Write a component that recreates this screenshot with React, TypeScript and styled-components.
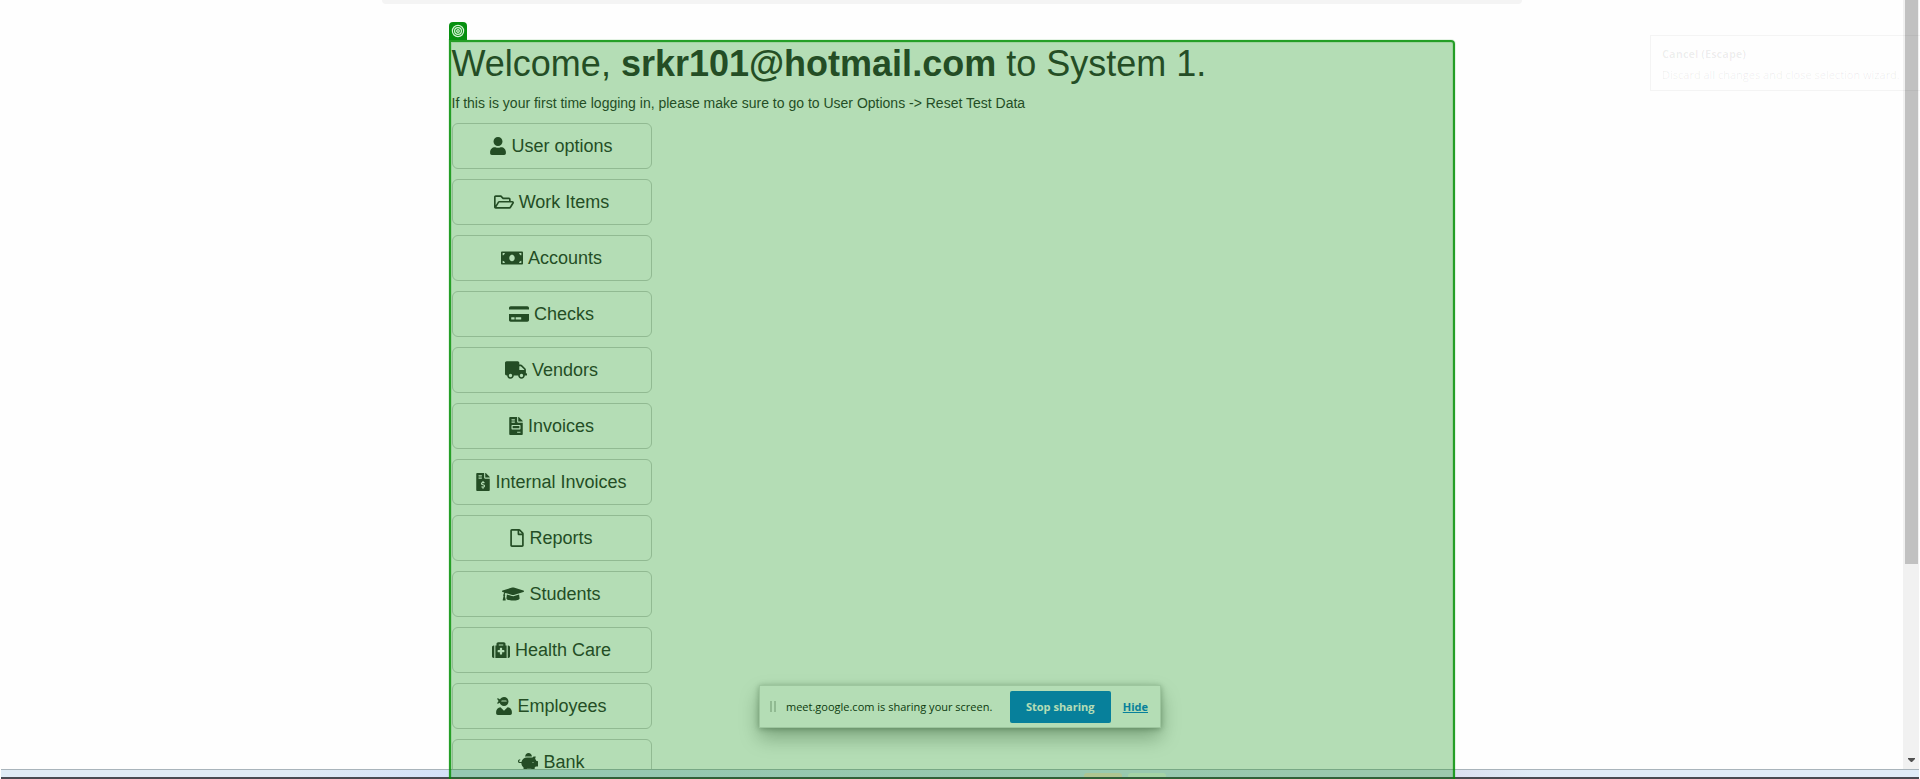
import React from 'react';
import styled, { createGlobalStyle } from 'styled-components';
import type { IconType } from 'react-icons';
import {
  FaUser, FaRegFolderOpen, FaMoneyBill, FaCreditCard, FaTruck, FaFileInvoice,
  FaFileInvoiceDollar, FaRegFile, FaGraduationCap, FaMedkit, FaUserNinja, FaPiggyBank,
} from 'react-icons/fa';

const uiFont = `'Segoe UI', 'Open Sans', 'Noto Sans', sans-serif`;

const GlobalStyle = createGlobalStyle`
  *, *::before, *::after { box-sizing: border-box; }
  body {
    margin: 0;
    background: #fefefe;
    color: #333;
    font: 14px/20px 'Liberation Sans', Arial, sans-serif;
  }
`;

const Screen = styled.div`
  position: relative;
  display: grid;
  grid-template-columns: 1fr 16px;
  grid-template-rows: 1fr 10px;
  height: 100vh;
  padding-right: 1px;
  overflow: hidden;
`;

const Page = styled.div`
  min-height: 0;
`;

const NavEdge = styled.div`
  max-width: 1140px;
  height: 4px;
  margin: 0 auto 36px;
  border-radius: 0 0 4px 4px;
  background: #f4f4f4;
`;

const Selection = styled.main`
  position: relative;
  max-width: 1006px;
  height: calc(100vh - 40px);
  margin: 0 auto;
  padding: 3px;
  border-radius: 0 4px 0 0;

  &::after {
    content: '';
    position: absolute;
    z-index: 5;
    inset: 0;
    border: 2px solid rgba(0, 143, 3, 0.8);
    border-bottom: 0;
    border-radius: inherit;
    background: rgba(0, 143, 3, 0.29);
    box-shadow: 0 0 0 1px rgba(0, 143, 3, 0.1), inset 0 0 0 1px rgba(0, 143, 3, 0.12);
    pointer-events: none;
  }
`;

const SelectionTag = styled.span`
  position: absolute;
  z-index: 6;
  left: 0;
  bottom: 100%;
  display: grid;
  place-items: center;
  width: 18px;
  height: 18px;
  border-radius: 4px 4px 0 0;
  background: #079010;
`;

const Title = styled.h1`
  margin: 0 0 8px;
  font-size: 36px;
  line-height: 42px;
  font-weight: 400;
`;

const Hint = styled.p`
  margin: 0 0 10px;
`;

const Menu = styled.nav`
  display: flex;
  flex-direction: column;
  align-items: flex-start;
  gap: 10px;
`;

const MenuButton = styled.button<{ $iconWidth: number }>`
  display: flex;
  align-items: center;
  justify-content: center;
  gap: 5px;
  width: 200px;
  height: 46px;
  padding: 0;
  border: 1px solid #ccc;
  border-radius: 6px;
  background: transparent;
  color: inherit;
  font: inherit;
  font-size: 18px;
  line-height: 24px;

  svg {
    flex: none;
    height: 18px;
    width: ${(p) => p.$iconWidth}px;
  }
`;

const ScrollTrack = styled.div`
  display: flex;
  flex-direction: column;
  align-items: center;
  justify-content: space-between;
  padding-bottom: 7px;
  background: #f1f1f1;
`;

const ScrollThumb = styled.div`
  width: 13px;
  height: 74%;
  background: #c1c1c1;
`;

const Taskbar = styled.footer`
  grid-column: 1 / -1;
  position: relative;
  display: flex;
  justify-content: center;
  gap: 6px;
  margin-left: 1px;
  padding: 3px 0 0 330px;
  border-top: 1px solid #a9b4bb;
  border-bottom: 2px solid #4a4a52;
  background: linear-gradient(90deg, #e0ebf5 15%, #d3e1f9 24%, #d6e2f5 60%, #dde0f2 76%, #e0ecf8 80%);
`;

const TaskItem = styled.span<{ $tone: string }>`
  width: 38px;
  border-radius: 3px 3px 0 0;
  background: ${(p) => p.$tone};
`;

const Tooltip = styled.div`
  position: absolute;
  z-index: 7;
  top: 35px;
  right: -8px;
  width: 278px;
  padding: 7px 11px 5px;
  border: 1px solid rgba(0, 0, 0, 0.04);
  color: rgba(0, 0, 0, 0.07);
  font: 11px/21px ${uiFont};
  white-space: nowrap;

  p { margin: 0; }
`;

const ShareBar = styled.div`
  position: absolute;
  z-index: 3;
  bottom: 51px;
  left: 50%;
  display: flex;
  align-items: center;
  width: 402px;
  height: 43px;
  margin-left: -201px;
  padding: 0 12px 0 10px;
  border: 1px solid #ddd;
  background: #fefefe;
  box-shadow: 0 10px 20px rgba(0, 0, 0, 0.3), 0 1px 6px rgba(0, 0, 0, 0.3);
  color: #111;
  font: 11px/16px ${uiFont};
  white-space: nowrap;
`;

const Grip = styled.span`
  width: 6px;
  height: 11px;
  margin-right: 10px;
  border: solid #ccc;
  border-width: 0 2px;
`;

const ShareText = styled.span`
  flex: 1;
`;

const StopButton = styled.button`
  flex: none;
  width: 101px;
  height: 32px;
  margin-right: 12px;
  padding: 0;
  border: 0;
  border-radius: 2px;
  background: #0b7bd9;
  color: #fefefe;
  font: inherit;
  font-weight: 700;
`;

const HideLink = styled.a`
  color: #0b7bd9;
  font-weight: 700;
`;

const items: { label: string; icon: IconType; width: number }[] = [
  { label: 'User options', icon: FaUser, width: 16 },
  { label: 'Work Items', icon: FaRegFolderOpen, width: 20 },
  { label: 'Accounts', icon: FaMoneyBill, width: 22 },
  { label: 'Checks', icon: FaCreditCard, width: 20 },
  { label: 'Vendors', icon: FaTruck, width: 22 },
  { label: 'Invoices', icon: FaFileInvoice, width: 14 },
  { label: 'Internal Invoices', icon: FaFileInvoiceDollar, width: 14 },
  { label: 'Reports', icon: FaRegFile, width: 14 },
  { label: 'Students', icon: FaGraduationCap, width: 22 },
  { label: 'Health Care', icon: FaMedkit, width: 18 },
  { label: 'Employees', icon: FaUserNinja, width: 16 },
  { label: 'Bank', icon: FaPiggyBank, width: 20 },
];

export default function App() {
  return (
    <>
      <GlobalStyle />
      <Screen>
        <Page>
          <NavEdge />
          <Selection>
            <SelectionTag>
              <svg width="14" height="14" viewBox="0 0 14 14" fill="none" stroke="#d4f3d5" strokeWidth="1.2">
                <circle cx="7" cy="7" r="5.6" />
                <circle cx="7" cy="7" r="3.4" />
                <circle cx="7" cy="7" r="1.3" />
              </svg>
            </SelectionTag>
            <Title>Welcome, <b>srkr101@hotmail.com</b> to System 1.</Title>
            <Hint>If this is your first time logging in, please make sure to go to User Options -&gt; Reset Test Data</Hint>
            <Menu>
              {items.map(({ label, icon: Icon, width }) => (
                <MenuButton key={label} type="button" $iconWidth={width}><Icon />{label}</MenuButton>
              ))}
            </Menu>
          </Selection>
        </Page>
        <ScrollTrack>
          <ScrollThumb />
          <svg width="7" height="4" viewBox="0 0 7 4" fill="#505050"><path d="M0 0h7v1L4 4H3L0 1z" /></svg>
        </ScrollTrack>
        <Taskbar>
          <TaskItem $tone="#f6dccb" />
          <TaskItem $tone="#e8f0e8" />
        </Taskbar>
        <ShareBar>
          <Grip />
          <ShareText>meet.google.com is sharing your screen.</ShareText>
          <StopButton type="button">Stop sharing</StopButton>
          <HideLink href="#">Hide</HideLink>
        </ShareBar>
        <Tooltip role="tooltip">
          <p><b>Cancel (Escape)</b></p>
          <p>Discard all changes and close selection wizard.</p>
        </Tooltip>
      </Screen>
    </>
  );
}
